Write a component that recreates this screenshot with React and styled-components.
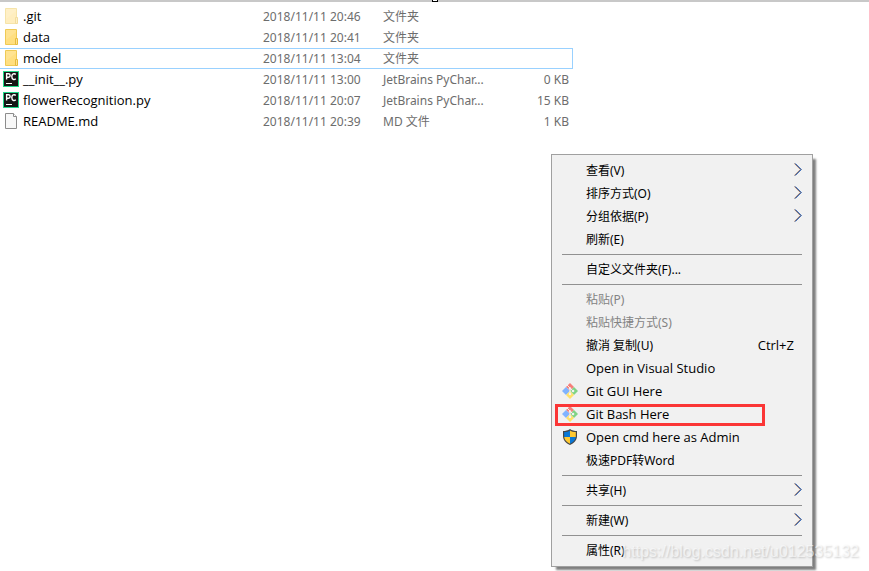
import styled, { createGlobalStyle, css } from "styled-components";

const GlobalStyle = createGlobalStyle`
*, *::after {
box-sizing: border-box;
}
body {
margin: 0;
background-color: #ffffff;
font-family: "Noto Sans", "Noto Sans CJK SC", sans-serif;
font-size: 12px;
}
`

const Page = styled.main`
position: relative;
min-height: 100vh;
overflow: hidden;
`

const TopEdge = styled.div`
display: flex;
justify-content: center;
height: 2px;
margin-bottom: 4px;
background-color: #c8c8c8;
`

const EdgeHandle = styled.span`
width: 6px;
height: 2px;
border: 1px solid #000000;
border-top: 0;
background-color: #ffffff;
`

const FileTable = styled.table`
width: 100%;
max-width: 573px;
table-layout: fixed;
border-collapse: collapse;
`

const NameCol = styled.col`
width: 263px;
`
const DateCol = styled.col`
width: 120px;
`
const TypeCol = styled.col`
width: 110px;
`

const FileRow = styled.tr`
height: 21px;
${({ $focused }) => $focused && css`
box-shadow: inset 0 1px #99d1ff, inset 0 -1px #99d1ff, inset -1px 0 #99d1ff;
`}
`

const Cell = styled.td`
height: 21px;
padding: 0;
color: #6d6d6d;
line-height: 20px;
white-space: nowrap;
vertical-align: middle;
`

const NameCell = styled(Cell)`
vertical-align: top;
`

const SizeCell = styled(Cell)`
padding-right: 4px;
text-align: right;
`

const FileName = styled.div`
display: flex;
align-items: center;
gap: 4px;
height: 20px;
padding-left: 3px;
color: #000000;
font-family: "Open Sans", sans-serif;
font-size: 13px;
line-height: 20px;
`

const Icon = styled.svg`
display: block;
flex: none;
width: 16px;
height: 16px;
opacity: ${({ $faded }) => ($faded ? 0.5 : 1)};
`

const Menu = styled.div`
position: absolute;
top: 154px;
left: 551px;
width: 262px;
padding: 4px 0;
border: 1px solid #a0a0a0;
background-color: #f1f1f1;
box-shadow: 4px 4px 2px -1px rgba(0, 0, 0, 0.5);
`

const MenuItem = styled.button`
position: relative;
display: flex;
align-items: center;
width: 100%;
height: 23px;
padding: 0 10px;
border: 0;
background: none;
color: ${({ disabled }) => (disabled ? "#838383" : "#000000")};
font-family: inherit;
font-size: 12px;
line-height: 20px;
text-align: left;
white-space: nowrap;
${({ $latin }) => $latin && css`
padding-bottom: 2px;
font-family: "Open Sans", sans-serif;
font-size: 13px;
`}
${({ $marked }) => $marked && css`
&::after {
content: "";
position: absolute;
top: 1px;
left: 3px;
width: 210px;
height: 22px;
border: 3px solid #fb3636;
}
`}
`

const IconSlot = styled.span`
width: 24px;
flex: none;
`

const Label = styled.span`
flex: 1;
`

const Shortcut = styled.span`
padding: 0 8px 2px 0;
font-family: "Open Sans", sans-serif;
font-size: 13px;
`

const Arrow = styled.svg`
width: 8px;
height: 15px;
flex: none;
`

const Separator = styled.hr`
height: 1px;
margin: 3px 10px;
border: 0;
background-color: #919191;
`

const Watermark = styled.span`
position: absolute;
right: 10px;
bottom: 9px;
color: rgba(255, 255, 255, 0.6);
font-family: "Liberation Sans", sans-serif;
font-size: 16px;
line-height: 20px;
text-shadow: 1px 1px 2px rgba(0, 0, 0, 0.2);
pointer-events: none;
`

const FolderIcon = ({ faded }) => (
    <Icon viewBox="0 0 16 16" $faded={faded} aria-hidden="true">
        <path d="M2.5.5h11v15h-11z" fill="#ffe391" stroke="#efca55" />
        <path d="M3 11l10-8v12H3z" fill="#ffdf80" />
        <path d="M12.500 9.500h2v6h-2z" fill="#ffe391" stroke="#e6bc3f" />
    </Icon>
)

const PyCharmIcon = () => (
    <Icon viewBox="0 0 16 16" aria-hidden="true">
        <path d="M0 0h16v16H0z" fill="#21d789" />
        <path d="M1 1h14v14H1z" fill="#151515" />
        <path d="M3.600 8.500V2.700h1.800a1.600 1.600 0 0 1 0 3.500H3.600M12.800 3.400c-1.700-1.400-4-.6-4 2.200s2.300 3.600 4 2.200" fill="none" stroke="#ffffff" strokeWidth="1.400" />
        <path d="M3 12h6v1H3z" fill="#ffffff" />
    </Icon>
)

const DocIcon = () => (
    <Icon viewBox="0 0 16 16" aria-hidden="true">
        <path d="M2.500.5h8l3 3v12h-11z" fill="#f8f8f8" stroke="#8c8c8c" />
        <path d="M10.500.5v3h3" fill="#ffffff" stroke="#8c8c8c" />
    </Icon>
)

const GitIcon = () => (
    <Icon viewBox="0 0 16 16" aria-hidden="true">
        <path d="M8 0l4 4-4 4-4-4z" fill="#f77f79" />
        <path d="M4 4l4 4-4 4-4-4z" fill="#80b3ff" />
        <path d="M12 4l4 4-4 4-4-4z" fill="#80d485" />
        <path d="M8 8l4 4-4 4-4-4z" fill="#ffe168" />
        <path d="M5 2l6 6M8 5v7" fill="none" stroke="#f1f1f1" />
        <circle cx="8" cy="5.500" r="1.300" fill="#f1f1f1" />
        <circle cx="8" cy="11" r="1.300" fill="#f1f1f1" />
        <circle cx="11" cy="8" r="1.300" fill="#f1f1f1" />
    </Icon>
)

const ShieldIcon = () => (
    <Icon viewBox="0 0 16 16" aria-hidden="true">
        <path d="M8 0c2 1.600 4.500 2 7 2v5c0 4-3 7.500-7 9-4-1.500-7-5-7-9V2c2.500 0 5-.4 7-2z" fill="#464646" />
        <path d="M8 1.500V8H2.200V3.100C4.500 3 6.500 2.600 8 1.500zM8 8h5.800c-.4 3-2.600 5.400-5.800 6.700z" fill="#0a78d6" />
        <path d="M8 1.500V8h5.800V3.100C11.500 3 9.500 2.600 8 1.500zM8 8H2.200c.4 3 2.600 5.400 5.800 6.700z" fill="#ffc931" />
    </Icon>
)

const SubmenuArrow = () => (
    <Arrow viewBox="0 0 8 15" aria-hidden="true">
        <path d="M.3.500l6 6-6 6" fill="none" stroke="#e0a060" strokeWidth=".8" />
        <path d="M1.500.500l6 6-6 6" fill="none" stroke="#4a94ee" strokeWidth=".9" />
        <path d="M.9.500l6 6-6 6" fill="none" stroke="#1b2258" strokeWidth=".8" />
    </Arrow>
)

const files = [
    { name: ".git", date: "2018/11/11 20:46", type: "文件夹", size: "", icon: <FolderIcon faded /> },
    { name: "data", date: "2018/11/11 20:41", type: "文件夹", size: "", icon: <FolderIcon /> },
    { name: "model", date: "2018/11/11 13:04", type: "文件夹", size: "", icon: <FolderIcon />, focused: true },
    { name: "__init__.py", date: "2018/11/11 13:00", type: "JetBrains PyChar...", size: "0 KB", icon: <PyCharmIcon /> },
    { name: "flowerRecognition.py", date: "2018/11/11 20:07", type: "JetBrains PyChar...", size: "15 KB", icon: <PyCharmIcon /> },
    { name: "README.md", date: "2018/11/11 20:39", type: "MD 文件", size: "1 KB", icon: <DocIcon /> },
]

const menuGroups = [
    [
        { label: "查看(V)", submenu: true },
        { label: "排序方式(O)", submenu: true },
        { label: "分组依据(P)", submenu: true },
        { label: "刷新(E)" },
    ],
    [{ label: "自定义文件夹(F)..." }],
    [
        { label: "粘贴(P)", disabled: true },
        { label: "粘贴快捷方式(S)", disabled: true },
        { label: "撤消 复制(U)", shortcut: "Ctrl+Z" },
        { label: "Open in Visual Studio", latin: true },
        { label: "Git GUI Here", latin: true, icon: <GitIcon /> },
        { label: "Git Bash Here", latin: true, icon: <GitIcon />, marked: true },
        { label: "Open cmd here as Admin", latin: true, icon: <ShieldIcon /> },
        { label: "极速PDF转Word" },
    ],
    [{ label: "共享(H)", submenu: true }],
    [{ label: "新建(W)", submenu: true }],
    [{ label: "属性(R)" }],
]

const FileList = () => (
    <FileTable>
        <colgroup>
            <NameCol />
            <DateCol />
            <TypeCol />
            <col />
        </colgroup>
        <tbody>
            {files.map((file) => (
                <FileRow key={file.name} $focused={file.focused}>
                    <NameCell>
                        <FileName>
                            {file.icon}
                            {file.name}
                        </FileName>
                    </NameCell>
                    <Cell>{file.date}</Cell>
                    <Cell>{file.type}</Cell>
                    <SizeCell>{file.size}</SizeCell>
                </FileRow>
            ))}
        </tbody>
    </FileTable>
)

const MenuGroup = ({ items, first }) => (
    <>
        {!first && <Separator />}
        {items.map((item) => (
            <MenuItem
                key={item.label}
                type="button"
                role="menuitem"
                disabled={item.disabled}
                $latin={item.latin}
                $marked={item.marked}
            >
                <IconSlot>{item.icon}</IconSlot>
                <Label>{item.label}</Label>
                {item.shortcut && <Shortcut>{item.shortcut}</Shortcut>}
                {item.submenu && <SubmenuArrow />}
            </MenuItem>
        ))}
    </>
)

const App = () => {
    return (
        <Page lang="zh-CN">
            <GlobalStyle />
            <TopEdge>
                <EdgeHandle />
            </TopEdge>
            <FileList />
            <Menu role="menu">
                {menuGroups.map((items, index) => (
                    <MenuGroup key={items[0].label} items={items} first={index === 0} />
                ))}
            </Menu>
            <Watermark>https://blog.csdn.net/u012535132</Watermark>
        </Page>
    )
}

export default App
